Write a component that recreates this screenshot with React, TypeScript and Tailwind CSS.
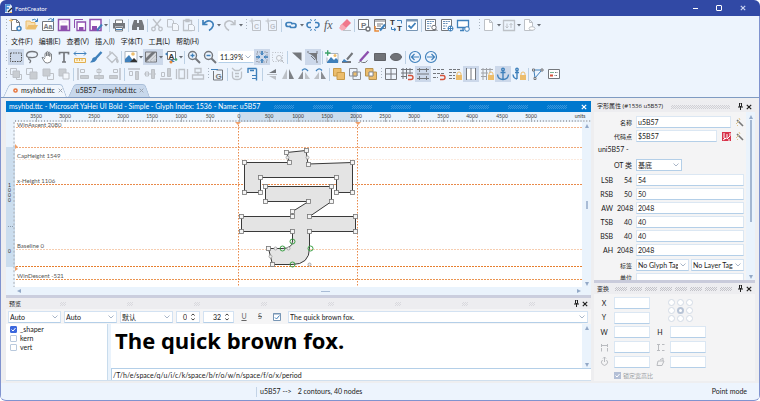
import { useState, type ReactNode } from 'react'
import clsx from 'clsx'

const GRAY = '#bdc1c7'
const DARK = '#74777c'
const BLUE = '#3f80bb'
const PURPLE = '#8d4fae'
const GOLD = '#ecbd6c'

const page = <path d="M3.5 2.5h5l3 3v8h-8zM8.5 2.5v3h3" fill="#fff" />
const lock = (
  <>
    <path d="M10 9V8a2 2 0 0 1 4 0v1" stroke={GOLD} />
    <path d="M9 9h6v5H9z" fill={GOLD} stroke="none" />
  </>
)
const magnet = <path d="M9 9.500h3a2 2 0 0 1 0 4H9" stroke="#d5533c" strokeWidth="1.400" />
const grid = <path d="M2.500 2.500h11v11h-11zM2.500 8h11M8 2.500v11" stroke={DARK} />
const letters = 'font-["Liberation_Sans",sans-serif] font-bold'

// 16x16 toolbar drawings
const icons: Record<string, ReactNode> = {
  new: (
    <g stroke={DARK}>
      {page}
      <path d="M1 3.500h4M3 1.500v4" stroke={GOLD} />
      <circle cx="11" cy="11.500" r="2" stroke={BLUE} strokeWidth="1.500" fill="#fff" />
    </g>
  ),
  open: (
    <>
      <path d="M2 12V4h4l1 1.500h4V8" fill="#f7dfb2" stroke={GOLD} />
      <path d="M2 12.500L4.500 8H14l-2.500 4.500z" fill={GOLD} stroke="none" />
      <path d="M8 3q3-2 5 1M13.500 1.500V4.500H11" stroke={BLUE} />
    </>
  ),
  openFont: (
    <>
      <path d="M2.500 4.500h11v9h-11z" fill="#fff" stroke={DARK} />
      <text x="3.500" y="12" fontSize="7" fill={DARK} stroke="none" className={letters}>Aa</text>
      <path d="M8 3q3-3 5 0M13.500 1V4H11" stroke={BLUE} />
    </>
  ),
  save: (
    <>
      <path d="M2.500 2.500h11v11h-11z" fill="#fff" stroke={PURPLE} strokeWidth="1.500" />
      <path d="M4.500 8.500h7v4.500h-7z" fill={PURPLE} stroke="none" />
      <path d="M5.500 3h5v3h-5z" fill="#efe4f5" stroke="none" />
    </>
  ),
  saveAll: (
    <g stroke={PURPLE}>
      <path d="M2.500 11V2.500H11" />
      <path d="M5 5h8.500v8.500H5z" fill="#fff" strokeWidth="1.300" />
      <path d="M7 10h4.500v3H7z" fill={PURPLE} stroke="none" />
    </g>
  ),
  saveAs: (
    <>
      <path d="M2 2.500h11v11H2z" fill="#fff" stroke={PURPLE} strokeWidth="1.500" />
      <path d="M4 9h5v4H4z" fill={PURPLE} stroke="none" />
      <path d="M9 13.500l5-6" stroke={BLUE} strokeWidth="2" />
    </>
  ),
  print: (
    <>
      <path d="M4.500 6V3h7v3M4.500 10.500h7V14h-7z" fill="#fff" stroke={DARK} />
      <path d="M2 6h12v5.500h-2V9.500H4v2H2z" fill={DARK} stroke="none" />
      <path d="M5 12.500h6" stroke={BLUE} />
    </>
  ),
  find: (
    <g fill={DARK} stroke="none">
      <path d="M4 3h3v10H2V9zM9 3h3l2 6v4H9zM7 6h2v4H7z" />
    </g>
  ),
  cut: (
    <g stroke={GRAY} strokeWidth="1.300">
      <path d="M4 2l6.500 8M12 2L5.500 10" />
      <circle cx="4.500" cy="12" r="1.800" />
      <circle cx="11.500" cy="12" r="1.800" />
    </g>
  ),
  copy: (
    <g stroke={GRAY}>
      <path d="M2.500 2.500H7l1.500 1.500v6h-6z" />
      <path d="M7.500 6.500h4l2 2v5h-6z" fill="#f3f7fc" />
    </g>
  ),
  paste: (
    <g stroke={GRAY}>
      <path d="M2.500 3.500h8v10h-8zM5 2.500h3v2H5z" strokeWidth="1.300" />
      <path d="M7.500 7.500h4l2 2v4h-6z" fill="#f3f7fc" />
    </g>
  ),
  undo: <path d="M3 3v4.500h4.500M3.500 7q3-4 6.500-3 4 1.500 3 5-1 3-4 4.500" stroke={BLUE} strokeWidth="1.700" />,
  redo: <path d="M13 3v4.500H8.500M12.500 7q-3-4-6.500-3-4 1.500-3 5 1 3 4 4.500" stroke={GRAY} strokeWidth="1.500" />,
  addC: (
    <>
      <path d="M4.500 5.500v8h8v-10h-6" stroke={GRAY} />
      <path d="M1.500 4h5M4 1.500v5" stroke={GRAY} />
      <text x="6" y="12" fontSize="7" fill={GRAY} stroke="none" className={letters}>C</text>
    </>
  ),
  addG: (
    <>
      <path d="M4.500 5.500v8h8v-10h-6" stroke={GRAY} />
      <path d="M1.500 4h5M4 1.500v5" stroke={GRAY} />
      <text x="6" y="12" fontSize="7" fill={GRAY} stroke="none" className={letters}>G</text>
    </>
  ),
  link: (
    <g stroke={BLUE} strokeWidth="1.700">
      <path d="M7.500 9.500H5a2 2 0 0 1 0-4h2.500q1.500 0 1.500 2M8.500 6.500H11a2 2 0 0 1 0 4H8.500Q7 10.500 7 8.500" />
    </g>
  ),
  unlink: (
    <g stroke={BLUE} strokeWidth="1.600">
      <path d="M6 5.500H4.500a2.500 2.500 0 0 0 0 5H6M10 5.500h1.500a2.500 2.500 0 0 1 0 5H10" />
      <path d="M5.500 2l1 2M10.500 2l-1 2M5.500 14l1-2M10.500 14l-1-2" strokeWidth="1" />
    </g>
  ),
  fx: (
    <text x="3" y="12" fontSize="12" fill="#55585e" stroke="none" className='font-["Liberation_Serif",serif] italic'>fx</text>
  ),
  eraser: (
    <>
      <path d="M10 2l4 4-7 7-4-4z" fill="#f0788c" stroke="none" />
      <path d="M5 7l4.500 4L7 13.500H4.500L2 11z" fill="#f7a9b5" stroke="none" />
      <path d="M6 13.500h8" stroke={GRAY} />
    </>
  ),
  fontProps: (
    <>
      <path d="M2.500 2.500h10v10h-10z" fill="#fff" stroke={DARK} />
      <text x="5" y="10.500" fontSize="8" fill={DARK} stroke="none" className={letters}>P</text>
      <circle cx="12" cy="12" r="2" fill="#fff" stroke={DARK} strokeWidth="1.400" />
    </>
  ),
  transformer: (
    <>
      <path d="M2.500 2.500h11v9h-11z" fill="#fff" stroke={DARK} />
      <path d="M2 4h12M5 7h6M5 9h4" stroke={DARK} />
      <path d="M3 9v5h4" stroke="#e98b3a" strokeWidth="1.500" />
      <path d="M8 13.500l5-6" stroke={BLUE} strokeWidth="2" />
    </>
  ),
  replace: (
    <>
      <text x="2" y="8" fontSize="8" fill="#333" stroke="none" className={letters}>T</text>
      <text x="9" y="14" fontSize="8" fill="#333" stroke="none" className={letters}>T</text>
      <path d="M9 3.500h4.500v3M3.500 10v2.500h4M6 11l2 1.500L6 14" stroke={BLUE} />
    </>
  ),
  validate: (
    <>
      <path d="M2.500 2.500h11v11h-11z" fill="#fff" stroke="#7896b5" />
      <path d="M2 3.500h12" stroke="#7896b5" strokeWidth="2" />
      <path d="M4.500 8.500L7 11l4.500-5" stroke={BLUE} strokeWidth="1.800" />
    </>
  ),
  preview: (
    <>
      <path d="M2.500 2.500h10v11h-10z" fill="#fff" stroke={DARK} />
      <path d="M4 4.500h7M4 6.500h5M4 9h4M4 11.500h3" stroke="#6b93bb" strokeDasharray="2 .6" />
      <circle cx="11" cy="10.500" r="2.200" fill="#fff" stroke={DARK} />
      <path d="M12.500 12l2 2" stroke={DARK} />
    </>
  ),
  webPreview: (
    <>
      <path d="M2.500 2.500h10v11h-10z" fill="#fff" stroke={DARK} />
      <path d="M4 4.500h7M4 6.500h5M4 9h4M4 11.500h3" stroke="#6b93bb" strokeDasharray="2 .6" />
      <circle cx="11.500" cy="11.500" r="2.500" fill="#fff" stroke={BLUE} />
      <path d="M9 11.500h5M11.500 9v5" stroke={BLUE} />
    </>
  ),
  install: (
    <>
      <path d="M2.500 3.500h11v7h-11zM5 13.500h4M8 11v2" stroke={BLUE} strokeWidth="1.300" fill="#fff" />
      <circle cx="12" cy="12" r="2.300" fill="#fff" stroke={BLUE} />
    </>
  ),
  doc: <g stroke={GRAY}>{page}</g>,
  sort: (
    <g stroke={GRAY}>
      <path d="M2.500 3v10.500h11V3M2 3.500h12" strokeWidth="1.300" />
      <path d="M6 6.500v4.500M4.500 9.500L6 11l1.500-1.500M10 11V6.500M8.500 8L10 6.500 11.500 8" />
    </g>
  ),
  docLink: (
    <g stroke={GRAY}>
      {page}
      <ellipse cx="11" cy="11.500" rx="3" ry="1.800" fill="#fff" />
    </g>
  ),
  select: <path d="M2.500 4h11v8.500h-11z" stroke="#555" strokeDasharray="1.500 1" />,
  lasso: <path d="M2.500 6Q3 2.500 8 2.500q5.500 0 5.500 3Q13 9 6.500 8.500 2.500 8.500 2.500 6M5 8.500q-1 2 1 2.500 1.500 1-.5 3" stroke={DARK} strokeWidth="1.300" />,
  hand: <path d="M5 8.500V4.500q1-1 1.500 0V7 3q1-1 1.700 0v4V3.500q1-1 1.600 0V7.500V5q1-1 1.700 0v5q0 4-4 4-3 0-3.500-2L2 8.500q1-1 3 1.500" stroke={DARK} fill="#fff" strokeWidth=".9" />,
  text: <path d="M3.500 5.500V3.500h9v2M8 3.500v9.500M6 13h4" stroke={DARK} strokeWidth="1.700" />,
  measure: (
    <>
      <path d="M2 4.500h12M4 2.500l-2 2 2 2M12 2.500l2 2-2 2" stroke={BLUE} />
      <path d="M2.500 9.500h11v4h-11zM5 10v2M7.500 10v2M10 10v2" stroke="#e2b04f" fill="#fdf3da" />
    </>
  ),
  brush: (
    <>
      <path d="M13.500 3L7.500 9.500" stroke={BLUE} strokeWidth="2.500" />
      <path d="M8 8Q4 8 4 11l-2 2.500Q7 14 9 10z" fill={BLUE} stroke="none" />
    </>
  ),
  bucket: <path d="M3 8.500l5-5 5 5-5 5zM6 5V2M13 9.500q2 3 .5 4-1.500-1-.5-4" stroke={GRAY} strokeWidth="1.300" />,
  image: (
    <>
      <path d="M2 2.500h12v11H2z" fill="#fff" stroke="#aab4be" />
      <path d="M2 13V10l4-4 5 7z" fill={BLUE} stroke="none" />
      <path d="M7 13l4-4 3 3v1z" fill="#333" stroke="none" />
      <circle cx="10" cy="5" r="1.800" fill={GOLD} stroke="none" />
    </>
  ),
  contrast: (
    <>
      <path d="M2.500 3h11v10h-11z" fill="#d6d9de" stroke={DARK} />
      <path d="M3 13V9l6-6h4z" fill={DARK} stroke="none" />
      <path d="M6 13l7-7M9.500 13L13 9.500" stroke={GRAY} />
    </>
  ),
  glyphTool: (
    <>
      <path d="M4.500 2.500h8v8h-8z" stroke={DARK} fill="#fff" />
      <text x="5.500" y="10" fontSize="8" fill="#333" stroke="none" className={letters}>A</text>
      <path d="M2 5l2.500-2v4zM6 13l3-2.500L12 13z" fill={BLUE} stroke="none" />
      <circle cx="8" cy="13" r="1.500" fill="#e98b3a" stroke="none" />
      <circle cx="13" cy="10.500" r="1.300" fill="#3fa46a" stroke="none" />
    </>
  ),
  zoomIn: (
    <>
      <circle cx="6.500" cy="6.500" r="4" stroke={DARK} strokeWidth="1.400" />
      <path d="M9.500 9.500l4.500 4.500" stroke={DARK} strokeWidth="2" />
      <path d="M4.500 6.500h4M6.500 4.500v4" stroke={BLUE} strokeWidth="1.300" />
    </>
  ),
  zoomOut: (
    <>
      <circle cx="6.500" cy="6.500" r="4" stroke={DARK} strokeWidth="1.400" />
      <path d="M9.500 9.500l4.500 4.500" stroke={DARK} strokeWidth="2" />
      <path d="M4.500 6.500h4" stroke={BLUE} strokeWidth="1.300" />
    </>
  ),
  fit: (
    <>
      <path d="M3 3h10v10H3z" stroke={DARK} strokeDasharray="1 1.500" />
      <path d="M8 2v4M8 10v4M2 8h4M10 8h4" stroke={BLUE} strokeWidth="1.600" />
      <path d="M6.500 4L8 6l1.500-2M6.500 12L8 10l1.500 2M4 6.500L6 8 4 9.500M12 6.500L10 8l2 1.500" stroke={BLUE} strokeWidth=".8" />
    </>
  ),
  zoomSel: (
    <g stroke={GRAY}>
      <path d="M2.500 3.500h10v9h-10z" strokeDasharray="1 1.500" />
      <circle cx="9" cy="9" r="2.500" fill="#f3f7fc" />
      <path d="M11 11l3 3" />
    </g>
  ),
  corner: <path d="M3 3.500h9.500V12z" fill={DARK} stroke="none" />,
  curve: (
    <>
      <path d="M3 4h9v9Q10 7 3 4z" fill={DARK} stroke="none" />
      <path d="M2 3h2M12 2v3M12 12v2M6 7l4 4" stroke={DARK} />
    </>
  ),
  addImage: (
    <>
      <path d="M4 4.500h10v9H3v-5" fill="#fff" stroke="#aab4be" />
      <path d="M3 13l4-5 3 3 2-2 2 2v3H3z" fill={BLUE} stroke="none" />
      <circle cx="11" cy="6.500" r="1.500" fill={GOLD} stroke="none" />
      <path d="M1 4h5.500M3.700 1.200v5.500" stroke="#3fa46a" strokeWidth="1.400" />
    </>
  ),
  contour: (
    <>
      <path d="M2 13h9M12.500 4L7 10.500" stroke={DARK} strokeWidth="2" />
      <path d="M4 10l4 3H2z" fill={BLUE} stroke="none" />
    </>
  ),
  pencil: (
    <>
      <path d="M12.500 2.500L4 12" stroke={PURPLE} strokeWidth="2.300" />
      <path d="M2.500 13.500q2-2 4 0 3 1 5-2" stroke={DARK} />
    </>
  ),
  rect: <path d="M2.500 4.500h11v7h-11z" fill="#707277" stroke="#606267" />,
  ellipse: <ellipse cx="8" cy="8" rx="5.500" ry="3.500" fill="#707277" stroke="#606267" />,
  prev: (
    <g stroke={BLUE} strokeWidth="1.200">
      <circle cx="8" cy="8" r="5.500" />
      <path d="M12 8H5M7.500 5L4.500 8l3 3" />
    </g>
  ),
  next: (
    <g stroke={BLUE} strokeWidth="1.200">
      <circle cx="8" cy="8" r="5.500" />
      <path d="M4 8h7M8.500 5l3 3-3 3" />
    </g>
  ),
  front: <g stroke={GRAY}><path d="M2.500 2.500h6v6h-6zM8.500 8.500h5v5h-5z" /><path d="M5 5h6.500v6.500H5z" fill="#c9cdd2" /></g>,
  forward: <g stroke={GRAY}><path d="M2.500 2.500h6v6h-6z" /><path d="M6 6h7v7H6z" fill="#c9cdd2" /></g>,
  backward: <g stroke={GRAY}><path d="M7.500 7.500h6v6h-6z" /><path d="M3 3h7v7H3z" fill="#c9cdd2" /></g>,
  back: <g stroke={GRAY}><path d="M3 3h7v7H3z" fill="#c9cdd2" /><path d="M7 7h6v6H7z" fill="#f3f7fc" /></g>,
  alignL: <g stroke={GRAY}><path d="M3 2v12" strokeWidth="1.500" /><path d="M5.500 3.500h4v3h-4z" /><path d="M5.500 9.500h8v3h-8z" fill="#c9cdd2" /></g>,
  alignC: <g stroke={GRAY}><path d="M8 2v12" /><path d="M6 3.500h4v3H6z" /><path d="M3.500 9.500h9v3h-9z" fill="#c9cdd2" /></g>,
  alignR: <g stroke={GRAY}><path d="M13 2v12" strokeWidth="1.500" /><path d="M6.500 3.500h4v3h-4z" /><path d="M2.500 9.500h8v3h-8z" fill="#c9cdd2" /></g>,
  alignT: <g stroke={GRAY}><path d="M2 3h12" strokeWidth="1.500" /><path d="M3.500 5.500h3v4h-3z" /><path d="M9.500 5.500h3v8h-3z" fill="#c9cdd2" /></g>,
  alignM: <g stroke={GRAY}><path d="M2 8h12" /><path d="M3.500 6h3v4h-3z" /><path d="M9.500 3.500h3v9h-3z" fill="#c9cdd2" /></g>,
  alignB: <g stroke={GRAY}><path d="M2 13h12" strokeWidth="1.500" /><path d="M3.500 6.500h3v4h-3z" /><path d="M9.500 2.500h3v8h-3z" fill="#c9cdd2" /></g>,
  centerH: <g stroke={GRAY}><path d="M2.500 3v10M13.500 3v10M5 3.500h5.500v9H5z" strokeWidth="1.300" /></g>,
  centerV: <g stroke={GRAY} strokeWidth="1.300"><path d="M5 2.500h6v4H5zM2.500 9h11v4h-11zM8 6.500V9" /></g>,
  guideG: (
    <>
      <path d="M3.500 5v9h9V4h-6" stroke={DARK} />
      <path d="M1 3.500h7" stroke={BLUE} />
      <text x="5.500" y="12.500" fontSize="8" fill={DARK} stroke="none" className={letters}>G</text>
    </>
  ),
  clock: (
    <g stroke={GRAY} strokeWidth="1.300">
      <path d="M3.500 5.500v5q0 3 4.500 3t4.500-3v-5M3 2l3 2.500h4L13 2" />
      <path d="M6 7.500h4M6 10.500h4" />
    </g>
  ),
  metrics: (
    <>
      <path d="M11.500 2.500h-9M11.500 2.500v12M9 4.500H5M3 2v5" stroke={BLUE} strokeWidth="1.400" />
      <path d="M7 9.500h4M7 12.500h4" stroke={BLUE} />
    </>
  ),
  flipV: <g stroke={DARK}><path d="M3 8.500h10" stroke={GRAY} /><path d="M12 3v4H5z" fill={DARK} stroke="none" /><path d="M12 14v-4H5z" fill={GRAY} stroke="none" /></g>,
  flipH: <g stroke="none"><path d="M7 3v10H2z" fill={GRAY} /><path d="M9 3v10h5z" fill="#7d8085" /></g>,
  rotL: <g stroke="none"><path d="M7 5v8H2z" fill="#8a8d92" /><path d="M9 6l5 7H9z" fill={GRAY} /><path d="M6 4.500Q9 1 12 5" fill="none" stroke={BLUE} strokeWidth="1.300" /></g>,
  rotR: <g stroke="none"><path d="M9 5v8h5z" fill="#8a8d92" /><path d="M7 6l-5 7h5z" fill={GRAY} /><path d="M10 4.500Q7 1 4 5" fill="none" stroke={BLUE} strokeWidth="1.300" /></g>,
  union: <g fill={GOLD} stroke={DARK}><path d="M2.500 2.500h7.500v4h3.500v7H6v-3.500H2.500z" stroke="#c99a48" /><path d="M6 10V6.500h4" fill="none" stroke="#c99a48" /></g>,
  intersect: <g stroke="#8c8f94"><path d="M2.500 2.500H10V10H2.500zM6 6h7.500v7.500H6z" /><path d="M6 6h4v4H6z" fill={GOLD} /></g>,
  exclude: <g stroke="#b8924f"><path d="M2.500 2.500H10V10H2.500zM6 6h7.500v7.500H6z" fill={GOLD} /><path d="M6 6h4v4H6z" fill="#fff" stroke="#8c8f94" /></g>,
  grid,
  gridSnap: <><path d="M2 3.500h12M2 7h12M2 10.500h6M4 2v11M7.500 2v11M11 2v6" stroke={DARK} />{magnet}</>,
  guides: <path d="M2 3.500h12M2 8h12M2 12.500h12M4.500 2v4M11.500 2v4M4.500 10v4M11.500 10v4" stroke={DARK} />,
  guideSnap: <><path d="M2 3.500h12M2 7.500h12M2 11.500h5" stroke={DARK} strokeDasharray="3 1" />{magnet}</>,
  guideLock: <><path d="M2 3.500h12M2 6.500h7M2 9.500h6M2 12.500h6" stroke={DARK} strokeDasharray="3 1" />{lock}</>,
  columns: <><path d="M4 3h8v10H4z" fill="#fff" stroke="none" /><path d="M3.500 2v12M8 2v12M12.500 2v12" stroke={DARK} /></>,
  gridLock: <><path d="M2 3.500h12M2 7h7M2 10.500h6M4 2v12M7.500 2v12M11 2v5" stroke="#a0a3a8" />{lock}</>,
  anchor: <g stroke={BLUE} strokeWidth="1.400"><circle cx="8" cy="3.500" r="1.300" /><path d="M8 5v8.500M5.500 6.500h5M2.500 8.500q.5 5 5.500 5t5.500-5" /></g>,
  anchorLock: <><g stroke={BLUE} strokeWidth="1.400"><circle cx="6" cy="3.500" r="1.200" /><path d="M6 5v8M4 6.500h4M2 8.500q.5 4 4 4.500" /></g>{lock}</>,
  nodes: <g stroke={DARK}><path d="M4 5l1 7M5 12l6-7M5 4h6" stroke={BLUE} /><path d="M2.500 3h2v2h-2zM11 3h2v2h-2zM4 11.500h2v2H4z" fill="#fff" /></g>,
  samples: <><path d="M2.500 3.500h11v9h-11z" fill="#fff" stroke={DARK} /><path d="M4 6.500h4" stroke="#7cb393" /><path d="M4 9.500h3" stroke="#d5533c" strokeWidth="2" /><path d="M9 6.500h3M8.500 9.500h3" stroke={DARK} strokeDasharray="1 .5" /></>,
}

function ToolButton({ icon, active }: { icon: string; active?: boolean }) {
  return (
    <button aria-label={icon} className={clsx('h-4 w-4 shrink-0', active && 'bg-[#ccd8ea]')}>
      <svg viewBox="0 0 16 16" className="h-4 w-4" fill="none" stroke="currentColor">
        {icons[icon]}
      </svg>
    </button>
  )
}

function Tools({ names, active = [] }: { names: string; active?: string[] }) {
  return names.split(' ').map((name) => <ToolButton key={name} icon={name} active={active.includes(name)} />)
}

function Sep() {
  return <div className="flex w-[3px] shrink-0 justify-center"><span className="h-[13px] w-px bg-[#bcd0e4]" /></div>
}

function Grip({ wide }: { wide?: boolean }) {
  return (
    <div className={clsx('flex shrink-0 justify-end pr-px', wide ? 'w-[10px]' : 'w-[4px]')}>
      <span className="h-3 w-px bg-[repeating-linear-gradient(#a9b3bf_0_1px,transparent_1px_3px)]" />
    </div>
  )
}

function Caret({ wide }: { wide?: boolean }) {
  return (
    <div className={clsx('flex shrink-0 justify-center', wide ? 'w-1.5' : 'w-1')}>
      <svg viewBox="0 0 4 3" className="h-[3px] w-1"><path d="M0 0h4L2 2.500z" fill="#666b73" /></svg>
    </div>
  )
}

function Chevron() {
  return (
    <svg viewBox="0 0 6 4" className="pointer-events-none absolute right-0.5 top-1/2 -mt-0.5 h-1 w-1.5" fill="none" stroke="#a9b6c8">
      <path d="M.5.5L3 3 5.500.5" />
    </svg>
  )
}

function Select({ value, label, className }: { value: string; label: string; className?: string }) {
  return (
    <div className={clsx('relative h-3 border border-[#d3e2f2] border-b-[#b4cfe8] bg-white', className)}>
      <select aria-label={label} className="block h-full w-full appearance-none overflow-hidden pl-px pr-2.5 leading-[10px] outline-none">
        <option>{value}</option>
      </select>
      <Chevron />
    </div>
  )
}

function Spin({ value, label, className }: { value: string; label: string; className?: string }) {
  return (
    <div className={clsx('flex h-3 items-center gap-1 border border-[#d3e2f2] border-b-[#b4cfe8] bg-white pr-1', className)}>
      <input aria-label={label} defaultValue={value} className="w-full min-w-0 text-right leading-[10px] outline-none" />
      <svg viewBox="0 0 4 8" className="h-2 w-1 shrink-0" fill="none" stroke="#444"><path d="M.3 2.500L2 1l1.700 1.500M.3 5.500L2 7l1.700-1.500" /></svg>
    </div>
  )
}

function Hatch({ className, cell = 'w-5' }: { className?: string; cell?: string }) {
  return (
    <div className={clsx('flex h-1 flex-1 justify-around overflow-hidden', className)}>
      {Array.from({ length: 8 }, (_, i) => (
        <span key={i} className={clsx('h-1 shrink-0 bg-[repeating-conic-gradient(currentColor_0_25%,transparent_0_50%)] bg-size-[2px_2px]', cell)} />
      ))}
    </div>
  )
}

function CloseIcon({ className }: { className?: string }) {
  return (
    <svg viewBox="0 0 6 6" className={clsx('h-1.5 w-1.5', className)} fill="none" stroke="currentColor" strokeWidth="1.200">
      <path d="M.8.8l4.400 4.400M5.200.8L.8 5.200" />
    </svg>
  )
}

function PanelButtons() {
  return (
    <div className="flex items-center gap-[3px] text-[#222]">
      <button aria-label="Pin">
        <svg viewBox="0 0 5 7" className="h-[7px] w-[5px]" fill="none" stroke="currentColor"><path d="M1.500 0v3.500h2V0zM0 4h5M2.500 4v3" /></svg>
      </button>
      <button aria-label="Close panel"><CloseIcon /></button>
    </div>
  )
}

function Arrow({ d, label }: { d: string; label: string }) {
  return (
    <button aria-label={label} className="flex h-[7px] w-[9px] items-center justify-center">
      <svg viewBox="0 0 4 4" className="h-1 w-1" fill="#93a9c7"><path d={d} /></svg>
    </button>
  )
}

const UP = 'M0 4h4L2 0z'
const DOWN = 'M0 0h4L2 4z'

function TitleBar() {
  return (
    <header className="flex h-4 shrink-0 items-center bg-[#3149a5] pl-1 pr-1.5 text-white">
      <svg viewBox="0 0 9 9" className="h-[9px] w-[9px]">
        <path d="M1 0h5l2 2v7H1z" fill="#dfeaf8" />
        <path d="M2 8V1h4M2 4h3" stroke="#2c7fd0" strokeWidth="1.400" fill="none" />
        <path d="M4 8l4-4" stroke="#222" strokeWidth="1.300" />
        <path d="M6 8.500h2" stroke="#efb84e" />
      </svg>
      <h1 className="pl-0.5 text-[6px]">FontCreator</h1>
      <div className="ml-auto flex">
        <button aria-label="Minimize" className="flex h-4 w-[23px] items-center justify-center"><span className="h-px w-[5px] bg-white" /></button>
        <button aria-label="Maximize" className="flex h-4 w-6 items-center justify-center"><span className="h-1.5 w-1.5 rounded-[1px] border border-white" /></button>
        <button aria-label="Close" className="flex h-4 w-[23px] items-center justify-center"><CloseIcon className="text-[#c9d2f0]" /></button>
      </div>
    </header>
  )
}

const menus = ['文件(F)', '编辑(E)', '查看(V)', '插入(I)', '字体(T)', '工具(L)', '帮助(H)']

function Toolbars() {
  return (
    <div className="shrink-0 pl-[3px] pt-px">
      <div className="flex h-4 items-center">
        <Grip />
        <Tools names="new open openFont save saveAll saveAs" /><Caret />
        <Sep /><Tools names="print" /><Sep /><Tools names="find" /><Sep />
        <Tools names="cut copy paste" /><Sep />
        <Tools names="undo" /><Caret wide /><Tools names="redo" /><Caret wide />
        <Grip /><Tools names="addC addG" /><Sep />
        <Tools names="link" /><Caret wide /><Tools names="unlink fx eraser" /><Sep />
        <Tools names="fontProps transformer replace validate" /><Sep />
        <Tools names="preview webPreview install" /><Grip wide />
        <Tools names="doc" /><Caret /><Tools names="sort" /><Caret /><Tools names="docLink" /><Caret />
      </div>
      <nav className="flex h-4 items-center">
        <Grip />
        <div className="flex gap-1.5 pl-[3px]">
          {menus.map((m) => <button key={m} className="whitespace-nowrap">{m}</button>)}
        </div>
      </nav>
      <div className="flex h-4 items-center">
        <Grip />
        <Tools names="select lasso hand text measure brush bucket" active={['select']} /><Sep />
        <Tools names="image" /><Caret />
        <div className="flex items-center bg-[#ccd8ea]"><Tools names="contrast" /><Caret /></div>
        <Tools names="glyphTool" /><Caret /><Sep />
        <Tools names="zoomIn zoomOut" />
        <Select label="Zoom" value="11.39%" className="w-9 shrink-0 border-transparent" />
        <Tools names="fit zoomSel" active={['fit']} /><Sep />
        <Tools names="corner curve" active={['curve']} /><Sep />
        <Tools names="addImage contour pencil rect ellipse" /><Sep />
        <Tools names="prev next" />
      </div>
      <div className="mt-px flex h-4 items-center">
        <Grip />
        <Tools names="front forward backward back" /><Sep />
        <Tools names="alignL alignC alignR" /><Sep />
        <Tools names="alignT alignM alignB centerH centerV" />
        <Grip /><Tools names="guideG" /><Sep />
        <Tools names="clock metrics" /><Sep />
        <Tools names="flipV flipH rotL rotR" /><Sep />
        <Tools names="union intersect exclude" /><Grip />
        <Tools
          names="grid gridSnap guides guideSnap guideLock columns gridLock anchor anchorLock"
          active={['guides', 'columns', 'anchor']}
        /><Sep />
        <Tools names="nodes samples" />
      </div>
    </div>
  )
}

function Tab({ active, children }: { active?: boolean; children: ReactNode }) {
  return (
    <div
      className={clsx(
        'relative isolate flex h-[13px] items-center gap-[3px] pr-[5px]',
        'before:absolute before:inset-y-0 before:left-0 before:right-1/2 before:-z-10 before:origin-bottom-left before:-skew-x-[25deg] before:rounded-tl-[3px] before:border-l before:border-t before:border-[#a9bed8]',
        'after:absolute after:inset-y-0 after:left-1/2 after:right-0 after:-z-10 after:origin-bottom-right after:skew-x-[20deg] after:rounded-tr-[3px] after:border-r after:border-t after:border-[#a9bed8]',
        active ? 'pl-2 before:bg-[#c8d8ec] after:bg-[#c8d8ec]' : 'pl-2.5 before:bg-[#f1f6fc] after:bg-[#f1f6fc]',
      )}
    >
      {children}
      <button aria-label="Close tab"><CloseIcon className="h-[5px] w-[5px] text-[#9aa3b0]" /></button>
    </div>
  )
}

// Editor canvas: 29px on the ruler is 500 font units
const rulerMarks = Array.from({ length: 18 }, (_, i) => ({ x: 36 + i * 29 - 6 + Math.floor(i / 8), text: String(Math.abs(i * 500 - 3500)) }))

const guides = [
  { y: 5, color: '#f2b48c', label: 'WinAscent 2080', textY: 5 },
  { y: 25, color: '#f0a878' },
  { y: 37, color: '#fbe9dd', label: 'CapHeight 1549', textY: 36 },
  { y: 62, color: '#e98a4a', label: 'x-Height 1106', textY: 61 },
  { y: 127, color: '#f6cdb0', label: 'Baseline 0', textY: 126 },
  { y: 144, color: '#e67e2e' },
  { y: 157, color: '#ea9450', label: 'WinDescent -521', textY: 156 },
]

const corners = [
  [229, 40], [274, 40], [271, 30], [291, 28], [293, 42], [337, 40], [337, 70], [321, 70], [321, 55], [245, 55], [245, 70], [229, 70],
  [250, 64], [316, 64], [316, 79], [294, 94], [340, 94], [340, 109], [294, 109], [257, 142], [253, 126], [277, 109],
  [226, 109], [226, 94], [277, 94], [277, 89], [293, 79], [250, 79],
]
const curvePoints = [[295, 126], [277, 142], [267, 126], [277, 119]]
const handles = [[294, 142], [260, 126], [273, 126], [255, 134], [272, 35], [292, 35]]

function GlyphCanvas() {
  return (
    <svg className="block h-full w-full overflow-visible bg-white" fill="none">
      {guides.map((g) => (
        <line key={g.y} x1="1" x2="100%" y1={g.y + 0.5} y2={g.y + 0.5} stroke={g.color} strokeDasharray="2 1" />
      ))}
      {[223.5, 342.5].map((x) => (
        <line key={x} x1={x} x2={x} y1="0" y2="100%" stroke="#e98a4a" strokeDasharray="1.500 1.500" />
      ))}
      <path d="M220 0h6l-3 3zM340 0h6l-3 3zM0 22v5l3-2zM0 144v5l3-2z" fill="#f0a06a" />
      <g fill="#e4e4e4" stroke="#3a3a3a">
        <path d="M229.500 40.500H274.500L271.500 30.500 291 28.500 293 42 337.500 40.500V70.500H321.500V55.500H245.500V70.500H229.500z" />
        <path d="M250.500 64.500H316.500V79.500L294.500 94.500H340.500V109.500H294.500V126Q294.500 142.500 277 142.500H257.500L253.500 126.500H267Q277.500 126.500 277.500 119V109.500H226.500V94.500H277.500V89.500L293.500 79.500H250.500z" />
      </g>
      {corners.map(([x, y]) => (
        <rect key={`${x}-${y}`} x={x - 1.5} y={y - 1.5} width="4" height="4" fill="#f4f4f4" stroke="#777" strokeWidth=".8" />
      ))}
      {handles.map(([x, y]) => <circle key={`${x}-${y}`} cx={x + 0.5} cy={y + 0.5} r="1.500" fill="#eee" stroke="#999" strokeWidth=".8" />)}
      {curvePoints.map(([x, y]) => <circle key={`${x}-${y}`} cx={x + 0.5} cy={y + 0.5} r="2.500" stroke="#3aa044" />)}
      <g fill="#555" fontSize="6">
        {guides.map((g) => g.label && <text key={g.label} x="2" y={g.textY}>{g.label}</text>)}
      </g>
    </svg>
  )
}

function Editor() {
  return (
    <section className="flex min-h-0 flex-1 flex-col">
      <div className="flex h-[11px] shrink-0 items-center gap-1 bg-[#0078ce] pl-[3px] pr-1 text-white">
        <h2 className="whitespace-nowrap">msyhbd.ttc - Microsoft YaHei UI Bold - Simple - Glyph Index: 1536 - Name: u5B57</h2>
        <Hatch className="text-[#3b97dc]" />
        <button aria-label="Close editor"><CloseIcon /></button>
      </div>
      <svg className="h-[10px] w-full shrink-0 bg-[#eaf3fc]" fill="none">
        <path d="M233 0h118v10H233z" fill="#cbddee" />
        <line x1="9" x2="100%" y1="9" y2="9" stroke="#a9adb3" strokeDasharray="1 1.900" strokeWidth="2" />
        {rulerMarks.map((m) => <line key={m.x} x1={m.x + 0.5} x2={m.x + 0.5} y1="6" y2="10" stroke="#a9adb3" />)}
        <g fill="#333" fontSize="5" textAnchor="middle">
          {rulerMarks.map((m) => <text key={m.x} x={m.x} y="6">{m.text}</text>)}
          <text x="100%" dx="-11" y="6">units</text>
        </g>
      </svg>
      <div className="flex min-h-0 flex-1">
        <svg className="h-full w-[9px] shrink-0 bg-[#eaf3fc]" fill="none">
          <path d="M0 25h9v120H0z" fill="#cbddee" />
          <line x1="8" x2="8" y1="0" y2="100%" stroke="#a9adb3" strokeDasharray="2 1.900" strokeWidth="1" />
          <path d="M2 104.500h6" stroke="#8b98a8" strokeDasharray="1 1" />
          <g fill="#333" fontSize="5">
            {['1', '0', '0', '0'].map((c, i) => <text key={i} x="2" y={65 + i * 5}>{c}</text>)}
            <text x="2" y="131">0</text>
          </g>
        </svg>
        <div className="min-w-0 flex-1"><GlyphCanvas /></div>
        <div className="flex w-[9px] shrink-0 flex-col items-center justify-between bg-[#eaf3fc]">
          <Arrow label="Scroll up" d={UP} />
          <span className="h-2 w-0.5 bg-[#a9bcd6]" />
          <Arrow label="Scroll down" d={DOWN} />
        </div>
      </div>
      <div className="flex h-2 shrink-0 items-center bg-[#eaf3fc] px-2">
        <Arrow label="Scroll left" d="M4 0v4L0 2z" />
        <span className="flex-[11]" />
        <span className="h-px w-[9px] bg-[#a9bcd6]" />
        <span className="flex-[9]" />
        <Arrow label="Scroll right" d="M0 0v4l4-2z" />
      </div>
    </section>
  )
}

function PreviewPanel() {
  const [features, setFeatures] = useState<Record<string, boolean>>({ _shaper: true, kern: false, vert: false })

  return (
    <section className="shrink-0 border-t-[3px] border-[#cbcede]">
      <div className="flex h-[11px] items-center gap-2 bg-[#ededf0] px-[3px]">
        <h2 className="text-[6px]">预览</h2>
        <Hatch className="text-[#d9d9de]" cell="w-1.5" />
        <PanelButtons />
      </div>
      <div className="flex h-[15px] items-center bg-[#f5f5f6] px-0.5 pr-[3px]">
        <div className="flex flex-1 items-center gap-[3px]">
          <Select label="Script" value="Auto" className="w-[53px]" />
          <Select label="Language" value="Auto" className="w-[53px]" />
          <Select label="Direction" value="默认" className="w-[53px]" />
          <Spin label="Spacing" value="0" className="w-6" />
          <Spin label="Size" value="32" className="w-[31px]" />
          <button className="w-3.5 underline text-[#666]">U</button>
          <button className="w-3 text-[#666] line-through">S</button>
          <button aria-label="Options" className="mx-1">
            <svg viewBox="0 0 8 8" className="h-2 w-2" fill="#fff" stroke="#7896b5"><path d="M.5.5h7v7h-7z" /><path d="M0 1h8" /><path d="M2 4.500L3.500 6 6.500 2.500" stroke={BLUE} fill="none" /></svg>
          </button>
          <Select label="Sample text" value="The quick brown fox." className="flex-1" />
        </div>
      </div>
      <div className="flex h-[57px] border-b border-[#d0dfee]">
        <ul className="w-[102px] shrink-0 border-r border-[#c8dced] bg-white pl-1 pt-px">
          {Object.entries(features).map(([name, on]) => (
            <li key={name}>
              <label className="flex h-[9px] items-center gap-[3px]">
                <input
                  type="checkbox"
                  checked={on}
                  onChange={() => setFeatures({ ...features, [name]: !on })}
                  className="peer sr-only"
                />
                <span className="flex h-[7px] w-[7px] items-center justify-center rounded-[1px] border border-[#b9c9dd] bg-white peer-checked:border-[#3c68dd] peer-checked:bg-[#3c68dd]">
                  {on && <svg viewBox="0 0 5 5" className="h-[5px] w-[5px]" fill="none" stroke="#fff"><path d="M.5 2.500L2 4l2.500-3" /></svg>}
                </span>
                {name}
              </label>
            </li>
          ))}
        </ul>
        <div className="w-[3px] shrink-0 bg-[#eaf3fc]" />
        <div className="flex min-w-0 flex-1 flex-col">
          <div className="flex flex-1 bg-white">
            <p className='flex-1 whitespace-nowrap pl-1 font-["Open_Sans",sans-serif] text-[22px] font-bold leading-[33px] text-black'>The quick brown fox.</p>
            <div className="flex w-[9px] flex-col justify-between bg-[#eaf3fc]">
              <Arrow label="Scroll up" d={UP} />
              <Arrow label="Scroll down" d={DOWN} />
            </div>
          </div>
          <input
            aria-label="Glyph sequence"
            defaultValue="/T/h/e/space/q/u/i/c/k/space/b/r/o/w/n/space/f/o/x/period"
            className="h-3 border-l border-t border-[#b4cfe8] bg-white pl-px leading-[11px] outline-none"
          />
        </div>
      </div>
    </section>
  )
}

const field = 'h-3 min-w-0 border border-[#dbe7f3] border-b-[#b4cfe8] bg-white pl-px leading-[10px] outline-none'

const metricRows = [
  ['LSB', '54'],
  ['RSB', '50'],
  ['AW', '2048'],
  ['TSB', '40'],
  ['BSB', '40'],
  ['AH', '2048'],
]

function Wand() {
  return (
    <button aria-label="Generate">
      <svg viewBox="0 0 9 9" className="h-[9px] w-[9px]" fill="none"><path d="M2 2l6 6" stroke="#777" strokeWidth="1.600" /><path d="M1 6l3-3M4 0l1 2M2 8l1-1" stroke="#e0c58a" /></svg>
    </button>
  )
}

function PropertiesPanel() {
  return (
    <section className="flex min-h-0 flex-1 flex-col bg-[#f4f4f5]">
      <div className="flex h-[11px] shrink-0 items-center gap-2 bg-[#ededf0] px-[3px]">
        <h2 className='whitespace-nowrap font-["Open_Sans","Noto_Sans_CJK_SC",sans-serif] text-[6px]'>字形属性 (#1536 u5B57)</h2>
        <Hatch className="text-[#cfcfd4]" />
        <PanelButtons />
      </div>
      <div className="flex min-h-0 flex-1">
        <div className="min-h-0 min-w-0 flex-1 overflow-hidden pr-0.5 pt-1">
          <div className="flex flex-col gap-0.5">
            <div className="flex items-center gap-1">
              <label htmlFor="name" className="w-[38px] text-right text-[6px]">名称</label>
              <input id="name" defaultValue="u5B57" className={clsx(field, 'flex-1')} />
              <Wand />
            </div>
            <div className="flex items-center gap-1">
              <label htmlFor="code" className="w-[38px] text-right text-[6px]">代码点</label>
              <input id="code" defaultValue="$5B57" className={clsx(field, 'flex-1')} />
              <button aria-label="Character" className="ml-px">
                <svg viewBox="0 0 9 9" className="h-[9px] w-[9px]" fill="none"><path d="M0 0h9v9H0z" fill="#d8334a" /><path d="M2 1v5q1 2 2 0M5 2v5l3-3V1M1 8l3-2M6 8h2" stroke="#fff" /></svg>
              </button>
              <Wand />
            </div>
          </div>
          <button className="mb-0.5 flex h-[15px] items-center pl-1">uni5B57 -</button>
          <div className="flex items-center gap-1">
            <label htmlFor="ot" className="w-[38px] text-right text-[7px]">OT 类</label>
            <div className="relative h-3 w-[46px] border border-[#b4cfe8] bg-white">
              <select id="ot" className="block h-full w-full appearance-none pl-px leading-[10px] outline-none">
                <option>基底</option>
              </select>
              <Chevron />
            </div>
          </div>
          <div className="mt-[3px] flex flex-col gap-0.5">
            {metricRows.map(([name, value]) => (
              <div key={name} className="flex items-center gap-1">
                <label htmlFor={name} className="flex w-[38px] justify-end gap-1">
                  <span>{name}</span>
                  <span className="w-[15px] text-right">{value}</span>
                </label>
                <input id={name} defaultValue={value} className={clsx(field, 'flex-1')} />
              </div>
            ))}
          </div>
          <div className="mt-[3px] flex items-center gap-1">
            <span className="w-[38px] shrink-0 text-right text-[6px]">标签</span>
            <div className="flex min-w-0 flex-1 gap-0.5">
              <Select label="Glyph tag" value="No Glyph Tag" className="min-w-0 flex-1" />
              <Select label="Layer tag" value="No Layer Tag" className="min-w-0 flex-1" />
            </div>
          </div>
          <div className="mt-0.5 flex items-start gap-1">
            <label htmlFor="unit" className="w-[38px] text-right text-[6px]">单位</label>
            <input id="unit" className={clsx(field, 'flex-1')} />
          </div>
        </div>
        <div className="flex w-[9px] shrink-0 flex-col items-center bg-[#eaf3fc] pt-px">
          <Arrow label="Scroll up" d={UP} />
          <span className="w-0.5 flex-[2_1_0%] bg-[#a3b7d2]" />
          <span className="flex-1" />
          <Arrow label="Scroll down" d={DOWN} />
        </div>
      </div>
    </section>
  )
}

const skewH = <path d="M1.500 1v3M7.500 1v3M1 2.500h7M1.500 5v3.500M7.500 5v3.500" />
const skewV = <path d="M1 1.500h3M1 7.500h3M2.500 1v7M6 1.500h2.500M6 7.500h2.500" />
const rotate = <path d="M2.500 3a3 3 0 1 0 4 0M4.500 0v5M3 1.500L4.500 0 6 1.500" />
const slant = <path d="M2 4h6l-2 4.500H1zM4 3l3-2v3" />

function Mini({ children }: { children: ReactNode }) {
  return <svg viewBox="0 0 9 9" className="mx-auto h-[9px] w-[9px]" fill="none" stroke="#b9bbbf">{children}</svg>
}

function TransformPanel() {
  return (
    <section className="shrink-0 border-t-[3px] border-[#c9cbdb] bg-[#f4f4f5]">
      <div className="flex h-[11px] items-center gap-1 bg-[#ededf0] px-[3px]">
        <h2 className="text-[6px]">变换</h2>
        <Hatch className="text-[#c3c3c9]" cell="w-3" />
        <PanelButtons />
      </div>
      <div className="grid h-[75px] w-[112px] grid-cols-[20px_36px_20px_36px] grid-rows-5 items-center pt-0.5 text-center">
        <label htmlFor="tx">X</label>
        <input id="tx" className={field} />
        <div className="col-span-2 row-span-2 grid grid-cols-3 justify-self-center gap-x-0.5 gap-y-px pl-1">
          {Array.from({ length: 9 }, (_, i) => (
            <input
              key={i}
              type="radio"
              name="origin"
              aria-label={`Origin ${i + 1}`}
              defaultChecked={i === 4}
              className="h-[7px] w-[7px] appearance-none rounded-full border border-[#d3dbe6] bg-white checked:border-2 checked:border-[#b8c4d6]"
            />
          ))}
        </div>
        <label htmlFor="ty">Y</label>
        <input id="ty" className={field} />
        <label htmlFor="tw">W</label>
        <input id="tw" className={field} />
        <label htmlFor="th">H</label>
        <input id="th" className={field} />
        <Mini>{skewH}</Mini>
        <input aria-label="Skew horizontal" className={field} />
        <Mini>{skewV}</Mini>
        <input aria-label="Skew vertical" className={field} />
        <Mini>{rotate}</Mini>
        <input aria-label="Rotate" className={field} />
        <Mini>{slant}</Mini>
        <input aria-label="Slant" className={field} />
      </div>
      <label className="flex h-3 items-center gap-0.5 pl-5 text-[6px] text-[#9b9ea4]">
        <input type="checkbox" defaultChecked disabled className="peer sr-only" />
        <span className="flex h-[7px] w-[7px] items-center justify-center bg-[#b3bfd6]">
          <svg viewBox="0 0 5 5" className="h-[5px] w-[5px]" fill="none" stroke="#fff"><path d="M.5 2.500L2 4l2.500-3" /></svg>
        </span>
        锁定宽高比
      </label>
    </section>
  )
}

export default function App() {
  return (
    <div className='flex h-screen flex-col overflow-hidden rounded-md border-b border-[#8093cf] bg-[#edf4fd] font-["Lato","Noto_Sans_CJK_SC",sans-serif] text-[7px] leading-[9px] text-[#1a1a1a]'>
      <TitleBar />
      <div className="flex min-h-0 flex-1 flex-col border-x border-[#8093cf]">
        <Toolbars />
        <div className="flex shrink-0 items-end border-b border-[#7f9bc2] pl-0.5 pt-0.5">
          <Tab>
            <svg viewBox="0 0 5 5" className="h-[5px] w-[5px]"><circle cx="2.500" cy="2.500" r="1.600" fill="none" stroke="#e8743a" strokeWidth="1.500" /></svg>
            <span>msyhbd.ttc</span>
          </Tab>
          <Tab active><span className="whitespace-nowrap">u5B57 - msyhbd.ttc</span></Tab>
        </div>
        <main className="flex min-h-0 flex-1 gap-[3px] bg-[#eeeef0] pb-0.5 pl-[5px] pr-1 pt-[3px]">
          <div className="flex min-w-0 flex-1 flex-col">
            <Editor />
            <PreviewPanel />
          </div>
          <aside className="flex w-[161px] shrink-0 flex-col">
            <PropertiesPanel />
            <TransformPanel />
          </aside>
        </main>
        <footer className="flex h-[17px] shrink-0 items-center pr-3">
          <div className="ml-[255px] flex h-2.5 items-center gap-1.5 border-l border-[#c3d3e6] pl-[3px]">
            <span>u5B57 --&gt;</span>
            <span>2 contours, 40 nodes</span>
          </div>
          <span className="ml-auto">Point mode</span>
        </footer>
      </div>
    </div>
  )
}
